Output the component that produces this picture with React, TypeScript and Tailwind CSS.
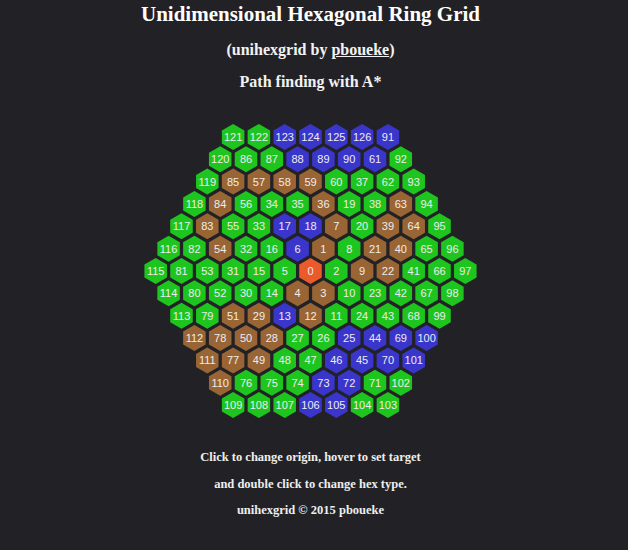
import React from 'react'

// cell colours by hex type
const FILL: Record<string, string> = {
  g: '#1fc51f',
  b: '#3a36cc',
  w: '#9a6535',
  o: '#ea5a2b',
}

// rows top to bottom, each cell is "label:type"
const ROWS: string[] = [
  '121g 122g 123b 124b 125b 126b 91b',
  '120g 86g 87g 88b 89b 90b 61b 92g',
  '119g 85w 57w 58w 59w 60g 37g 62g 93g',
  '118g 84w 56g 34g 35g 36w 19g 38g 63w 94g',
  '117g 83w 55g 33g 17b 18b 7w 20g 39w 64w 95g',
  '116g 82g 54w 32g 16g 6b 1w 8g 21w 40w 65g 96g',
  '115g 81g 53g 31g 15g 5g 0o 2g 9w 22w 41g 66g 97g',
  '114g 80g 52g 30g 14g 4w 3w 10g 23g 42g 67g 98g',
  '113g 79g 51w 29w 13b 12w 11g 24g 43g 68g 99g',
  '112w 78w 50w 28w 27g 26g 25b 44b 69b 100b',
  '111w 77w 49w 48g 47g 46b 45b 70b 101b',
  '110w 76g 75g 74g 73b 72b 71g 102g',
  '109g 108g 107g 106b 105b 104g 103g',
]

const DX = 25.8
const DY = 22.35
const R = 13
const CX = 310.5
const CY = 150

function hexPoints(x: number, y: number) {
  const w = (R * Math.sqrt(3)) / 2
  return [
    [x, y - R],
    [x + w, y - R / 2],
    [x + w, y + R / 2],
    [x, y + R],
    [x - w, y + R / 2],
    [x - w, y - R / 2],
  ]
    .map((p) => p.map((v) => v.toFixed(2)).join(','))
    .join(' ')
}

function HexGrid() {
  const cells: React.ReactNode[] = []
  ROWS.forEach((row, i) => {
    const items = row.split(' ')
    const r = i - 6
    const y = CY + r * DY
    const x0 = CX - ((items.length - 1) / 2) * DX
    items.forEach((item, j) => {
      const label = item.slice(0, -1)
      const type = item.slice(-1)
      const x = x0 + j * DX
      cells.push(
        <g key={label}>
          <polygon points={hexPoints(x, y)} fill={FILL[type]} />
          <text
            x={x}
            y={y + 4}
            textAnchor="middle"
            fontSize="11"
            fill="#ededed"
            fontFamily="'Liberation Sans', Arial, sans-serif"
          >
            {label}
          </text>
        </g>
      )
    })
  })
  return (
    <svg width="621" height="300" viewBox="0 0 621 300" className="block">
      {cells}
    </svg>
  )
}

export default function App() {
  return (
    <div className="min-h-screen bg-[#222226] font-['Liberation_Serif',serif]">
      <div className="w-[621px] text-center">
        <h1 className="pt-[1px] text-[21px] font-bold leading-[26px] text-white">
          Unidimensional Hexagonal Ring Grid
        </h1>
        <p className="mt-[13px] text-[16px] font-bold leading-[20px] text-[#f2f2f2]">
          (unihexgrid by <span className="underline">pboueke</span>)
        </p>
        <p className="mt-[12px] text-[16px] font-bold leading-[20px] text-[#f2f2f2]">
          Path finding with A*
        </p>
        <div className="mt-[29px]">
          <HexGrid />
        </div>
        <div className="mt-[29px] flex flex-col gap-[12.5px] text-[12.5px] font-bold leading-[14px] text-[#eeeeee]">
          <p>Click to change origin, hover to set target</p>
          <p>and double click to change hex type.</p>
          <p>unihexgrid © 2015 pboueke</p>
        </div>
      </div>
    </div>
  )
}
